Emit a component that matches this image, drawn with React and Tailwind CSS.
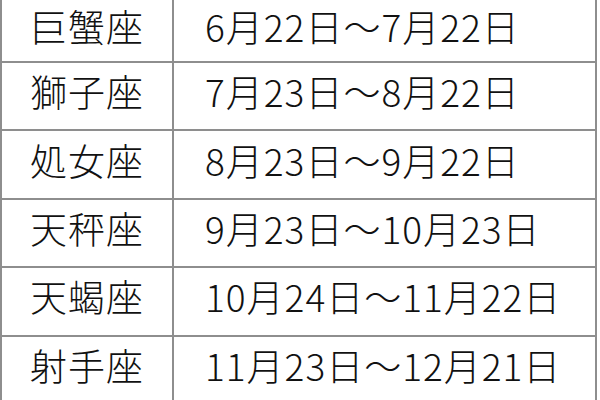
import React from "react";

const rows = [
  ["巨蟹座", "6月22日～7月22日"],
  ["獅子座", "7月23日～8月22日"],
  ["処女座", "8月23日～9月22日"],
  ["天秤座", "9月23日～10月23日"],
  ["天蝎座", "10月24日～11月22日"],
  ["射手座", "11月23日～12月21日"],
];

export default function App() {
  return (
    <div className="w-[600px] h-[400px] overflow-hidden bg-white">
      <div
        className="w-[597px] border-l-2 border-r-2 border-[#8e8e8e] text-[#111] text-[37px] leading-none font-light"
        style={{ fontFamily: '"Noto Sans CJK JP", "Noto Sans CJK SC", sans-serif' }}
      >
        {rows.map(([sign, date], i) => (
          <div
            key={sign}
            className={`flex border-b-2 border-[#8e8e8e] ${i === 0 ? "h-[63px]" : "h-[68.4px]"}`}
          >
            <div className="w-[172px] shrink-0 border-r-2 border-[#8e8e8e] flex items-center justify-center pb-[9px] tracking-[1px]">
              {sign}
            </div>
            <div className="flex-1 flex items-center pl-[31px] pb-[9px] tracking-[1px]">{date}</div>
          </div>
        ))}
      </div>
    </div>
  );
}
